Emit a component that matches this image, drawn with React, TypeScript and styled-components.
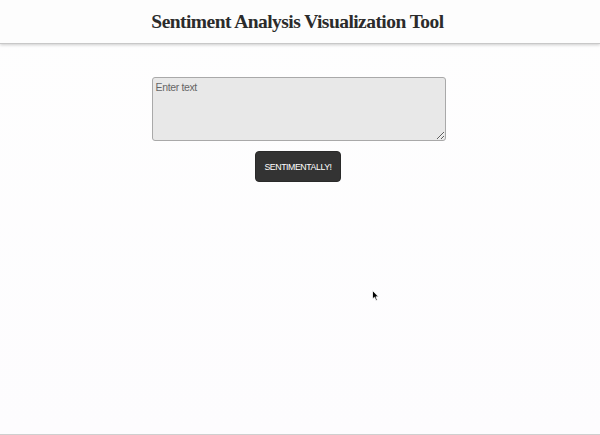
import React from "react";
import styled, { createGlobalStyle } from "styled-components";

const Global = createGlobalStyle`
  html, body { margin: 0; padding: 0; background: #fdfdfd; }
  * { box-sizing: border-box; }
`;

const Page = styled.div`
  position: relative;
  height: 435px;
  display: flex;
  flex-direction: column;
  align-items: center;
  border-bottom: 1px solid #cfcfcf;
  background: linear-gradient(#fefefe, #fdfcfe);
`;

const Header = styled.header`
  width: 100%;
  height: 44px;
  background: #fdfdfd;
  display: flex;
  align-items: center;
  justify-content: center;
  border-bottom: 1px solid #c8c8c8;
  box-shadow: 0 1px 3px rgba(0, 0, 0, 0.2);
`;

const Title = styled.h1`
  margin: 0 5px 0 0;
  font-family: "Liberation Serif", "Times New Roman", serif;
  font-weight: bold;
  font-size: 19.5px;
  letter-spacing: -0.55px;
  color: #2b2b2b;
`;

const Form = styled.div`
  margin-top: 33px;
  display: flex;
  flex-direction: column;
  align-items: center;
  gap: 10px;
`;

const TextArea = styled.textarea`
  width: 294px;
  height: 64px;
  margin-right: 3px;
  background: #e8e8e8;
  border: 1px solid #a9a9a9;
  border-radius: 3px;
  padding: 3px 3px;
  font-family: "Liberation Sans", Arial, sans-serif;
  font-size: 10.5px;
  letter-spacing: -0.35px;
  color: #333;
  resize: vertical;
  outline: none;
  &::placeholder { color: #666666; }
`;

const Button = styled.button`
  width: 86px;
  height: 31px;
  margin-right: 4px;
  background: #333333;
  color: #ffffff;
  border: 1px solid #2a2a2a;
  border-radius: 4px;
  font-family: "Liberation Sans", Arial, sans-serif;
  font-size: 8.8px;
  letter-spacing: -0.45px;
  text-transform: uppercase;
  cursor: pointer;
`;

const Cursor = styled.svg`
  position: absolute;
  left: 372px;
  top: 290px;
`;

export default function App() {
  return (
    <>
      <Global />
      <Page>
        <Header>
          <Title>Sentiment Analysis Visualization Tool</Title>
        </Header>
        <Form>
          <TextArea placeholder="Enter text" />
          <Button>Sentimentally!</Button>
        </Form>
        <Cursor width="8" height="12" viewBox="0 0 8 12">
          <path d="M0.5 0.5 L0.5 9 L2.5 7.2 L4 10.5 L5.3 9.9 L3.9 6.8 L6.5 6.8 Z" fill="#000" stroke="#fff" strokeWidth="0.8" />
        </Cursor>
      </Page>
    </>
  );
}
